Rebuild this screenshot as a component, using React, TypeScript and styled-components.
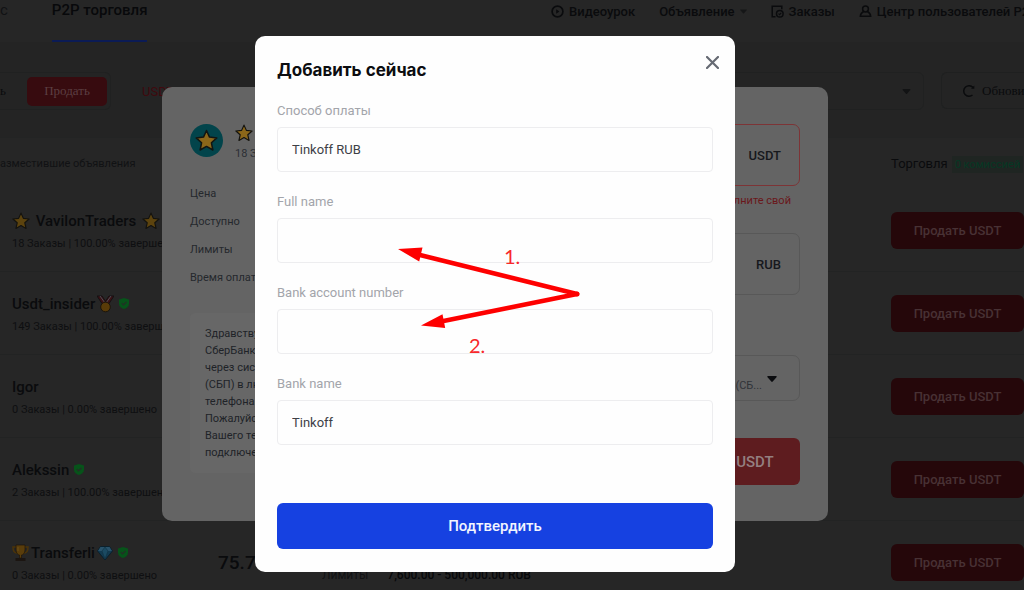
import React from "react";
import styled, { createGlobalStyle } from "styled-components";

const GlobalStyle = createGlobalStyle`
  *, *::before, *::after { box-sizing: border-box; }
  body {
    margin: 0;
    overflow: hidden;
    background: #262626;
    color: #0a0b0d;
    font-family: Roboto, "Noto Sans", sans-serif;
    font-size: 12px;
  }
  button, input, select { font: inherit; color: inherit; }
  button { padding: 0; border: 0; background: none; white-space: nowrap; }
  a { color: inherit; text-decoration: none; }
  svg { flex: none; }
`;

/* ---------- Page ---------- */

const Page = styled.main`
  min-height: 100vh;
  overflow: hidden;
  white-space: nowrap;
`;

const TopBar = styled.header`
  display: flex;
  justify-content: space-between;
  height: 42px;
`;

const Tabs = styled.nav`
  display: flex;
  gap: 44px;
`;

const Tab = styled.a<{ $active?: boolean }>`
  height: 42px;
  line-height: 21px;
  font-size: 15px;
  font-weight: ${(p) => (p.$active ? 500 : 400)};
  color: ${(p) => (p.$active ? "#08090b" : "#111214")};
  border-bottom: 2px solid ${(p) => (p.$active ? "#0b1b55" : "transparent")};
`;

const Tools = styled.nav`
  display: flex;
  flex: none;
  gap: 24px;
  width: 473px;
  height: 22px;
  font-size: 13px;
  font-weight: 500;
`;

const Tool = styled.a`
  display: flex;
  flex: none;
  align-items: center;
  gap: 5px;
`;

const Filters = styled.section`
  display: flex;
  align-items: flex-start;
  height: 95px;
  padding-top: 30px;
  background: #242424;
`;

const SideSwitch = styled.div`
  display: flex;
  align-items: center;
  justify-content: space-between;
  width: 111px;
  height: 38px;
  padding-right: 3px;
  border: 1px solid #202121;
  border-left: 0;
  border-radius: 0 6px 6px 0;
  font-family: "Liberation Serif", serif;
  font-size: 13px;
`;

const SellSide = styled.button`
  width: 80px;
  height: 29px;
  border-radius: 5px;
  background: #370b0f;
  color: #5c3f42;
  font-family: inherit;
`;

const Coin = styled.span`
  width: 168px;
  padding-left: 31px;
  line-height: 40px;
  font-size: 13px;
  color: #40090e;
`;

const FilterBox = styled.button`
  display: flex;
  flex: 1;
  align-items: center;
  justify-content: flex-end;
  height: 38px;
  margin-right: 17px;
  padding-right: 12px;
  border: 1px solid #202121;
  border-radius: 6px;
`;

const Refresh = styled.button`
  display: flex;
  flex: none;
  align-items: center;
  gap: 7px;
  width: 83px;
  height: 37px;
  padding-left: 20px;
  border: 1px solid #1f2020;
  border-right: 0;
  border-radius: 6px 0 0 6px;
  overflow: hidden;
  font-family: "Liberation Serif", serif;
  font-size: 13px;
`;

const Offers = styled.table`
  width: 100%;
  table-layout: fixed;
  border-collapse: separate;
  border-spacing: 0;
`;

const HeadCell = styled.th<{ $width?: number; $strong?: boolean }>`
  width: ${(p) => (p.$width ? `${p.$width}px` : "auto")};
  height: 52px;
  padding: 0;
  text-align: left;
  font-size: ${(p) => (p.$strong ? 13 : 11)}px;
  font-weight: 400;
  color: ${(p) => (p.$strong ? "#0a0b0d" : "#111214")};
  border-top: 1px solid #232424;
`;

const FeeBadge = styled.span`
  margin-left: 4px;
  padding: 2px 3px;
  background: #1f2522;
  color: #063824;
  font-size: 11px;
`;

const Cell = styled.td<{ $low?: boolean }>`
  height: 83px;
  padding: 0 0 ${(p) => (p.$low ? 20 : 0)}px;
  vertical-align: ${(p) => (p.$low ? "bottom" : "middle")};
  border-bottom: 1px solid #222323;
`;

const Trader = styled.div`
  display: flex;
  flex-direction: column;
  gap: 5px;
  padding: 2px 0 0 12px;
`;

const TraderName = styled.strong`
  display: flex;
  align-items: center;
  gap: 2px;
  height: 20px;
  font-size: 15px;
  font-weight: 500;
  white-space: pre;
`;

const Stats = styled.span`
  line-height: 16px;
  font-size: 11px;
  color: #0e0f11;
`;

const Price = styled.strong`
  font-size: 19px;
  font-weight: 500;
`;

const Limits = styled.div`
  display: flex;
  gap: 19px;
  line-height: 16px;
  font-size: 12px;
  color: #111214;
`;

const LimitRange = styled.span`
  font-weight: 500;
  color: #07080a;
`;

const TradeButton = styled.button`
  display: block;
  width: 100%;
  height: 37px;
  border-radius: 6px;
  background: #25070a;
  color: #483134;
  font-size: 13px;
  font-weight: 500;
`;

/* ---------- Dialogs ---------- */

const Layer = styled.div<{ $top: number }>`
  position: fixed;
  inset: 0;
  display: flex;
  justify-content: center;
  align-items: flex-start;
  padding: ${(p) => p.$top}px 34px 0 0;
`;

const OrderDialog = styled.section`
  display: grid;
  grid-template-columns: 1fr 286px;
  gap: 38px;
  width: 666px;
  padding: 37px 28px 36px;
  border-radius: 10px;
  background: #646464;
  color: #16181d;
`;

const SellerRow = styled.div`
  display: flex;
  gap: 12px;
  height: 33px;
  margin-bottom: 23px;
`;

const SellerInfo = styled.div`
  display: flex;
  flex-direction: column;
  gap: 4px;
  font-size: 11px;
  line-height: 16px;
  color: #2c2f34;
`;

const Facts = styled.ul`
  margin: 0 0 21px;
  padding: 0;
  list-style: none;
  line-height: 28px;
  font-size: 11px;
  color: #25282d;
`;

const Note = styled.p`
  margin: 0;
  padding: 12px 15px;
  border-radius: 5px;
  background: #676767;
  line-height: 17px;
  font-size: 11px;
  color: #202328;
  white-space: pre-line;
`;

const OrderForm = styled.div`
  display: flex;
  flex-direction: column;
`;

const AmountBox = styled.label<{ $error?: boolean }>`
  display: flex;
  align-items: center;
  height: 62px;
  padding: 0 18px;
  border: 1px solid ${(p) => (p.$error ? "#7d3436" : "#585858")};
  border-radius: 7px;
  font-size: 13px;
  font-weight: 500;
`;

const AmountInput = styled.input`
  flex: 1;
  min-width: 0;
  border: 0;
  outline: 0;
  background: transparent;
`;

const ErrorText = styled.span`
  margin: 7px 0 24px;
  padding-right: 9px;
  line-height: 16px;
  text-align: right;
  font-size: 11px;
  color: #6a171b;
`;

const MethodSelect = styled.button`
  display: flex;
  justify-content: flex-end;
  gap: 5px;
  height: 46px;
  margin: 60px 0 37px;
  padding: 20px 22px 0 0;
  border: 1px solid #585858;
  border-radius: 7px;
  line-height: 20px;
  font-size: 11px;
  color: #303338;
`;

const SellButton = styled.button`
  align-self: flex-end;
  width: 154px;
  height: 47px;
  border-radius: 6px;
  background: #5e1c1f;
  color: #947f80;
  font-size: 15px;
  font-weight: 500;
`;

const PaymentDialog = styled.form`
  position: relative;
  width: 480px;
  padding: 20px 22px 23px;
  border-radius: 10px;
  background: #fefefe;
`;

const DialogHead = styled.header`
  display: flex;
  justify-content: space-between;
  align-items: flex-start;
  margin: 0 -6px 20px 0;
`;

const DialogTitle = styled.h1`
  margin: 0;
  padding-top: 2px;
  line-height: 24px;
  font-family: Inter, sans-serif;
  font-size: 17px;
  font-weight: 700;
  color: #0c0d10;
`;

const CloseButton = styled.button`
  display: flex;
  color: #666a73;
`;

const Field = styled.label`
  display: flex;
  flex-direction: column;
  gap: 7px;
  margin-bottom: 21px;
  line-height: 18px;
  font-size: 13px;
  color: #a3a5ab;
`;

const TextInput = styled.input`
  width: 100%;
  height: 45px;
  padding: 0 14px;
  border: 1px solid #ededef;
  border-radius: 4px;
  outline: 0;
  background: transparent;
  color: #3d4046;
`;

const ConfirmButton = styled.button`
  display: block;
  width: 100%;
  height: 46px;
  margin-top: 58px;
  border-radius: 6px;
  background: #1641e1;
  color: #f2f5ff;
  font-size: 15px;
  font-weight: 500;
`;

const Marks = styled.svg`
  position: absolute;
  top: 204px;
  left: 135px;
  pointer-events: none;
`;

const MarkLabel = styled.span<{ $x: number; $y: number }>`
  position: absolute;
  left: ${(p) => p.$x}px;
  top: ${(p) => p.$y}px;
  line-height: 24px;
  font-family: Lato, sans-serif;
  font-size: 20px;
  color: #f8282b;
`;

/* ---------- Icons ---------- */

const Star = ({ size = 18, bright = false }) => (
  <svg width={size} height={size} viewBox="0 0 24 24" aria-hidden>
    <path
      d="M12 1.500l3.200 7 7.600.8-5.700 5.100 1.600 7.500L12 18.100l-6.700 3.800 1.600-7.500L1.200 9.300l7.600-.8z"
      fill={bright ? "#8b671a" : "#5c430e"}
      stroke="#14130f"
      strokeWidth="1.600"
      strokeLinejoin="round"
    />
  </svg>
);

const Medal = () => (
  <svg width="17" height="18" viewBox="0 0 17 18" aria-hidden>
    <path d="M0 1h5l4 6-3 3z" fill="#3b1114" stroke="#151113" />
    <path d="M17 1h-5L8 7l3 3z" fill="#3b1114" stroke="#151113" />
    <path d="M3 1l5 7M14 1L9 8" stroke="#4b4b55" />
    <circle cx="8.500" cy="12" r="4.800" fill="#593b08" stroke="#1b150b" />
  </svg>
);

const Trophy = () => (
  <svg width="17" height="18" viewBox="0 0 17 18" aria-hidden>
    <path d="M4 3H1c0 4 1 6 4 6M13 3h3c0 4-1 6-4 6" fill="none" stroke="#4c3409" strokeWidth="1.500" />
    <path d="M4 1h9v5c0 3-2 5-3.500 5v3h-2v-3C6 11 4 9 4 6z" fill="#593d0b" stroke="#1c160c" strokeWidth=".7" />
    <path d="M3.500 14h10v3h-10z" fill="#1b1511" />
    <path d="M6 3v4" stroke="#6c501a" />
  </svg>
);

const Gem = () => (
  <svg width="16" height="16" viewBox="0 0 16 16" aria-hidden>
    <path d="M3.500 1.500h9L15.500 6 8 15 .5 6z" fill="#123a50" stroke="#0b202c" />
    <path d="M1 6h14L12.500 2h-9z" fill="#28526a" />
    <path d="M5 6l3-4 3 4-3 8z" fill="#1b4a62" stroke="#10303f" strokeWidth=".6" />
  </svg>
);

const Shield = styled.svg`
  margin-left: 3px;
`;

const Verified = () => (
  <Shield width="10" height="11" viewBox="0 0 10 11" aria-hidden>
    <path d="M5 0l5 1.500v4.200C10 8.300 8 10 5 11 2 10 0 8.300 0 5.700V1.500z" fill="#07531a" />
    <path d="M2.800 5.200l1.700 1.700 3-3" fill="none" stroke="#262c27" strokeWidth="1.200" />
  </Shield>
);

const Caret = ({ color = "#121314", size = 10 }) => (
  <svg width={size} height={size === 10 ? 6 : 5} viewBox="0 0 10 6" aria-hidden>
    <path d="M1 0h8c.8 0 1 .6.500 1.200L5.700 5.600c-.4.5-1 .5-1.400 0L.5 1.200C0 .6.200 0 1 0z" fill={color} />
  </svg>
);

const PlayIcon = () => (
  <svg width="13" height="13" viewBox="0 0 13 13" aria-hidden>
    <circle cx="6.500" cy="6.500" r="5.400" fill="none" stroke="#0a0b0d" strokeWidth="1.700" />
    <path d="M5.200 4.300v4.400l3.200-2.200z" fill="#0a0b0d" />
  </svg>
);

const OrdersIcon = () => (
  <svg width="13" height="13" viewBox="0 0 13 13" fill="none" stroke="#0a0b0d" strokeWidth="1.500" aria-hidden>
    <path d="M4.500 11.800H1.200V1.200h9.600v3M1.200 11.800V1" />
    <circle cx="8.800" cy="8.800" r="3.300" />
    <path d="M7.500 8.600l1.100 1 1.600-1.700" strokeWidth="1.200" />
  </svg>
);

const UserIcon = () => (
  <svg width="13" height="13" viewBox="0 0 13 13" fill="none" stroke="#0a0b0d" strokeWidth="1.500" aria-hidden>
    <circle cx="6.500" cy="4" r="2.900" />
    <path d="M4.600 6.500C2.500 7.500 1.500 9 1.300 11.300h10.400C11.500 9 10.500 7.500 8.400 6.500" />
  </svg>
);

const RefreshIcon = () => (
  <svg width="13" height="14" viewBox="0 0 13 14" fill="none" stroke="#0a0b0d" strokeWidth="1.500" aria-hidden>
    <path d="M10.500 11A5.300 5.300 0 1 1 11 3.500" />
    <path d="M12.300 1.500v3.200H9z" fill="#0a0b0d" stroke="none" />
  </svg>
);

const CloseIcon = () => (
  <svg width="13" height="13" viewBox="0 0 13 13" aria-hidden>
    <path d="M1 1l11 11M12 1L1 12" stroke="currentColor" strokeWidth="2.200" strokeLinecap="round" />
  </svg>
);

const Avatar = () => (
  <svg width="33" height="33" viewBox="0 0 33 33" aria-hidden>
    <circle cx="16.500" cy="16.500" r="16.500" fill="#02444b" />
    <path
      d="M16.500 6.500l3 6.600 7.300.8-5.400 4.900 1.500 7.200-6.400-3.600-6.400 3.600 1.500-7.200-5.400-4.900 7.300-.8z"
      fill="#8b671a"
      stroke="#121512"
      strokeWidth="1.500"
      strokeLinejoin="round"
    />
  </svg>
);

/* ---------- Data ---------- */

type Offer = {
  name: string;
  before?: React.ReactNode;
  after?: React.ReactNode;
  stats: string;
  price?: string;
  limits?: string;
};

const offers: Offer[] = [
  { name: " VavilonTraders ", before: <Star />, after: <Star />, stats: "18 Заказы | 100.00% завершено" },
  { name: "Usdt_insider", after: <><Medal /><Verified /></>, stats: "149 Заказы | 100.00% завершено" },
  { name: "Igor", stats: "0 Заказы | 0.00% завершено" },
  { name: "Alekssin", after: <Verified />, stats: "2 Заказы | 100.00% завершено" },
  {
    name: "Transferli",
    before: <Trophy />,
    after: <><Gem /><Verified /></>,
    stats: "0 Заказы | 0.00% завершено",
    price: "75.70",
    limits: "7,600.00 - 500,000.00 RUB",
  },
];

const facts = ["Цена", "Доступно", "Лимиты", "Время оплаты"];

const note = [
  "Здравствуй",
  "СберБанк",
  "через сист",
  "(СБП) в лю",
  "телефона",
  "Пожалуйст",
  "Вашего тел",
  "подключен",
].join("\n");

const fields = [
  { label: "Способ оплаты", value: "Tinkoff RUB" },
  { label: "Full name", value: "" },
  { label: "Bank account number", value: "" },
  { label: "Bank name", value: "Tinkoff" },
];

export default function App() {
  return (
    <>
      <GlobalStyle />
      <Page>
        <TopBar>
          <Tabs>
            <Tab href="#">с</Tab>
            <Tab href="#" $active>P2P торговля</Tab>
          </Tabs>
          <Tools>
            <Tool href="#"><PlayIcon />Видеоурок</Tool>
            <Tool href="#">Объявление <Caret size={7} color="#151617" /></Tool>
            <Tool href="#"><OrdersIcon />Заказы</Tool>
            <Tool href="#"><UserIcon />Центр пользователей P2P</Tool>
          </Tools>
        </TopBar>
        <Filters>
          <SideSwitch>
            <span>ь</span>
            <SellSide type="button">Продать</SellSide>
          </SideSwitch>
          <Coin>USDT</Coin>
          <FilterBox type="button" aria-label="Фильтр"><Caret size={9} /></FilterBox>
          <Refresh type="button"><RefreshIcon />Обновить</Refresh>
        </Filters>
        <Offers>
          <thead>
            <tr>
              <HeadCell $width={218}>азместившие объявления</HeadCell>
              <HeadCell $width={104} />
              <HeadCell />
              <HeadCell $width={133} $strong>Торговля<FeeBadge>0 комиссией</FeeBadge></HeadCell>
            </tr>
          </thead>
          <tbody>
            {offers.map((o) => (
              <tr key={o.name}>
                <Cell>
                  <Trader>
                    <TraderName>{o.before}{o.name}{o.after}</TraderName>
                    <Stats>{o.stats}</Stats>
                  </Trader>
                </Cell>
                <Cell>{o.price && <Price>{o.price}</Price>}</Cell>
                <Cell $low>
                  {o.limits && <Limits>Лимиты<LimitRange>{o.limits}</LimitRange></Limits>}
                </Cell>
                <Cell><TradeButton type="button">Продать USDT</TradeButton></Cell>
              </tr>
            ))}
          </tbody>
        </Offers>
      </Page>

      <Layer $top={87}>
        <OrderDialog>
          <div>
            <SellerRow>
              <Avatar />
              <SellerInfo><Star size={18} bright />18 Заказы</SellerInfo>
            </SellerRow>
            <Facts>{facts.map((f) => <li key={f}>{f}</li>)}</Facts>
            <Note>{note}</Note>
          </div>
          <OrderForm>
            <AmountBox $error><AmountInput />USDT</AmountBox>
            <ErrorText>Пополните свой</ErrorText>
            <AmountBox><AmountInput />RUB</AmountBox>
            <MethodSelect type="button">(СБ...<Caret color="#0b0c0f" /></MethodSelect>
            <SellButton type="button">Продать USDT</SellButton>
          </OrderForm>
        </OrderDialog>
      </Layer>

      <Layer $top={36}>
        <PaymentDialog onSubmit={(e) => e.preventDefault()}>
          <DialogHead>
            <DialogTitle>Добавить сейчас</DialogTitle>
            <CloseButton type="button" aria-label="Закрыть"><CloseIcon /></CloseButton>
          </DialogHead>
          {fields.map((f) => (
            <Field key={f.label}>
              {f.label}
              <TextInput defaultValue={f.value} />
            </Field>
          ))}
          <ConfirmButton type="submit">Подтвердить</ConfirmButton>
          <Marks width="200" height="100" viewBox="390 240 200 100" aria-hidden>
            <path d="M418 254.500L577 294L441 321.500" fill="none" stroke="#fe0000" strokeWidth="4.600" strokeLinejoin="round" />
            <circle cx="577" cy="294" r="2.500" fill="#fe0000" />
            <path d="M398 249l24.500-1.500-3.300 14zM421 325.500l21.500-11.200 2.700 13.700z" fill="#fe0000" />
          </Marks>
          <MarkLabel $x={249} $y={208}>1.</MarkLabel>
          <MarkLabel $x={214} $y={297}>2.</MarkLabel>
        </PaymentDialog>
      </Layer>
    </>
  );
}
